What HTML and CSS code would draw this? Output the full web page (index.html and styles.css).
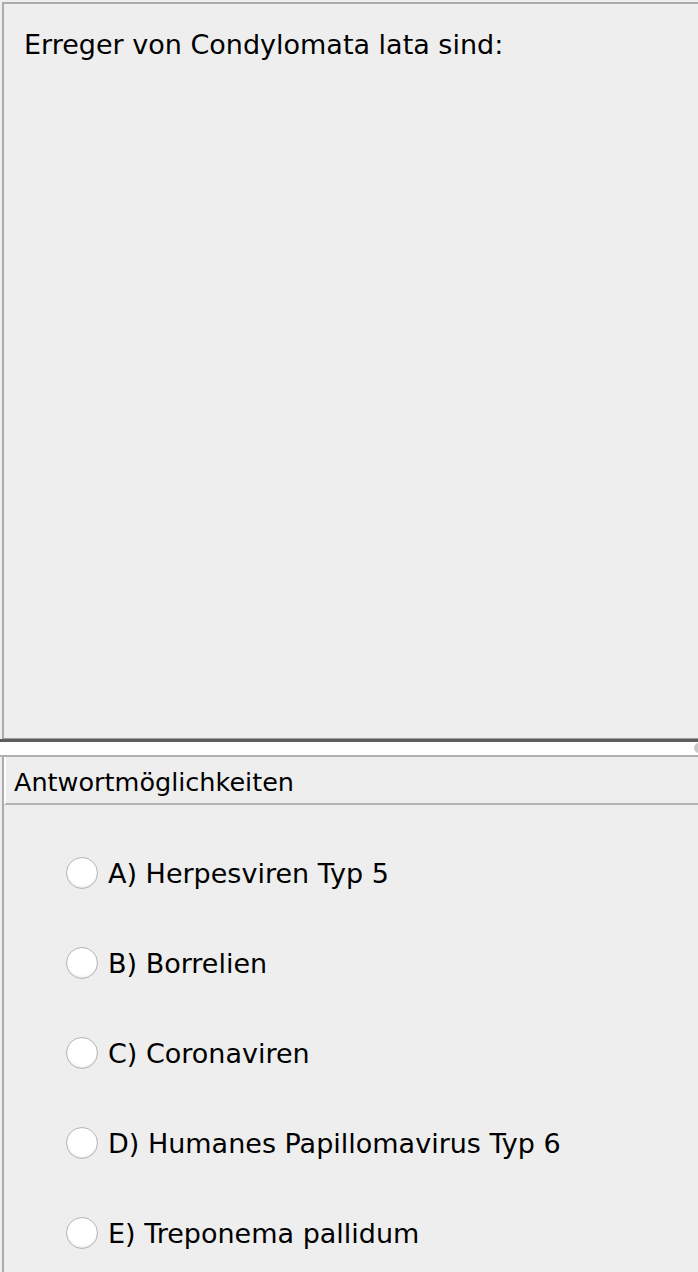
FILE: index.html
```html
<!DOCTYPE html>
<html lang="de">

<head>
    <meta charset="UTF-8">
    <meta name="viewport" content="width=device-width, initial-scale=1.0">
    <title>Frage</title>
    <link rel="stylesheet" href="styles.css">
</head>

<body>
    <div class="question">
        <p class="questionText">Erreger von Condylomata lata sind:</p>
    </div>

    <div class="splitter">
        <span class="knob"></span>
    </div>

    <div class="answers">
        <div class="answersHeader">Antwortmöglichkeiten</div>
        <ul class="options">
            <li class="option"><span class="radio"></span>A) Herpesviren Typ 5</li>
            <li class="option"><span class="radio"></span>B) Borrelien</li>
            <li class="option"><span class="radio"></span>C) Coronaviren</li>
            <li class="option"><span class="radio"></span>D) Humanes Papillomavirus Typ 6</li>
            <li class="option"><span class="radio"></span>E) Treponema pallidum</li>
        </ul>
    </div>
</body>

</html>
```

FILE: styles.css
```css
* {
    box-sizing: border-box;
}

html,
body {
    margin: 0;
    padding: 0;
    background-color: #eeeeee;
    height: 100%;
    overflow: hidden;
}

body {
    font-family: "DejaVu Sans", sans-serif;
    color: #000;
}

.question {
    margin: 2px 0 0 2px;
    height: 737px;
    border-top: 2px solid #ababab;
    border-left: 2px solid #ababab;
    border-bottom: 1px solid #9c9c9c;
    padding: 25px 0 0 20px;
}

.questionText {
    margin: 0;
    font-size: 27px;
    line-height: 32px;
}

.splitter {
    position: relative;
    height: 18px;
    border-top: 3px solid #5e5e5e;
    border-bottom: 2px solid #b0b0b0;
    background-color: #ffffff;
}

.knob {
    position: absolute;
    right: -6px;
    top: 1px;
    width: 10px;
    height: 10px;
    border-radius: 50%;
    background-color: #c8c8c8;
}

.answers {
    margin-left: 2px;
    border-left: 2px solid #ababab;
    height: 520px;
}

.answersHeader {
    height: 48px;
    padding: 10px 0 0 8px;
    font-size: 25.5px;
    line-height: 30px;
    border-left: 2px solid #ffffff;
    border-bottom: 2px solid #b3b3b3;
}

.options {
    list-style: none;
    margin: 0;
    padding: 45px 0 0 62px;
}

.option {
    display: flex;
    align-items: center;
    gap: 10px;
    height: 90px;
    font-size: 27px;
    margin-top: -22px;
    margin-bottom: 22px;
}

.radio {
    flex: none;
    width: 32px;
    height: 32px;
    border-radius: 50%;
    border: 1px solid #b5b5b5;
    background: radial-gradient(circle at 50% 40%, #ffffff 55%, #f3f3f3 100%);
    box-shadow: inset 0 -1px 1px rgba(0, 0, 0, 0.08);
}
```
